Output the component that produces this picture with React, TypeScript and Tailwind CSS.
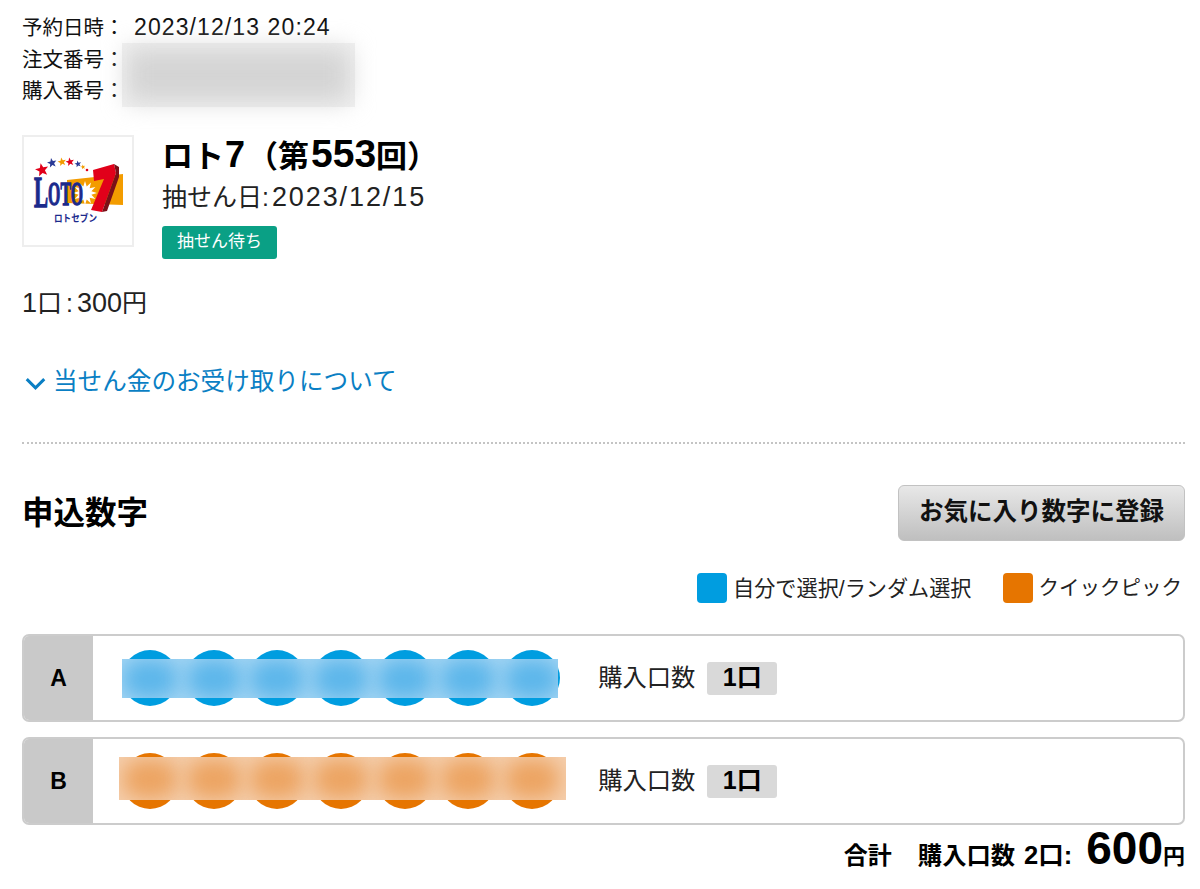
const fontStack = { fontFamily: '"Liberation Sans", "Noto Sans CJK JP", sans-serif' };

const BALLS = [0, 1, 2, 3, 4, 5, 6];

function Star({ x, y, r, fill }: { x: number; y: number; r: number; fill: string }) {
  const points = Array.from({ length: 10 }, (_, i) => {
    const radius = i % 2 === 0 ? r : r * 0.42;
    const angle = (Math.PI / 5) * i - Math.PI / 2 - 0.2;
    return `${x + radius * Math.cos(angle)},${y + radius * Math.sin(angle)}`;
  }).join(' ');
  return <polygon points={points} fill={fill} />;
}

function Burst({ x, y, r }: { x: number; y: number; r: number }) {
  const points = Array.from({ length: 24 }, (_, i) => {
    const radius = i % 2 === 0 ? r : r * 0.55;
    const angle = (Math.PI / 12) * i;
    return `${x + radius * Math.cos(angle)},${y + radius * Math.sin(angle)}`;
  }).join(' ');
  return <polygon points={points} fill="#ffffff" />;
}

function LotoLogo() {
  return (
    <svg viewBox="0 0 108 108" className="h-[108px] w-[108px]">
      <polygon points="43,43 99,37 99,68 43,66" fill="#f39c00" />
      <Burst x={61} y={56} r={12} />
      <text
        x="10"
        y="70"
        fontFamily="Liberation Serif"
        fontWeight="700"
        fill="#1b2a8c"
        stroke="#1b2a8c"
        strokeWidth="1.3"
        textLength="49"
        lengthAdjust="spacingAndGlyphs"
      >
        <tspan fontSize="44">L</tspan>
        <tspan fontSize="33" dy="-2">OTO</tspan>
      </text>
      <polygon points="69,33 90,27 92,36 78,75 67,73 80,42 70,44" fill="#e1001a" />
      <polygon points="90,27 95,30 95,40 83,74 78,75 92,36" fill="#7a1018" />
      <text x="30" y="85" fontFamily="Noto Sans CJK JP" fontWeight="700" fontSize="10" fill="#1b2a8c" textLength="43" lengthAdjust="spacingAndGlyphs">ロトセブン</text>
      <Star x={18} y={33} r={7} fill="#e1001a" />
      <Star x={28} y={26} r={5} fill="#2a3a96" />
      <Star x={38} y={25} r={4.5} fill="#f39c00" />
      <Star x={46} y={25} r={4.5} fill="#e1001a" />
      <Star x={54} y={27} r={3.5} fill="#2a3a96" />
      <Star x={59} y={30} r={2.5} fill="#f39c00" />
      <circle cx="63" cy="33" r="1.3" fill="#e1001a" />
    </svg>
  );
}

function Row({ label, color, patch, blob, inner }: { label: string; color: string; patch: string; blob: string; inner: string }) {
  return (
    <div className="flex h-[88px] overflow-hidden rounded-[7px] border-2 border-[#cccccc] bg-white">
      <div className="flex w-[69px] shrink-0 items-center justify-center bg-[#c9c9c9] text-[23px] font-bold text-black">
        {label}
      </div>
      <div className="flex flex-1 items-center">
        <div className="relative ml-[29px] flex gap-[7.7px]">
          {BALLS.map((n) => (
            <div key={n} className={`h-[56px] w-[56px] rounded-full ${color}`} />
          ))}
          {/* number hidden behind a blurred strip */}
          <div className={`absolute overflow-hidden ${patch}`}>
            <div className={`flex h-full items-center gap-[7.7px] ${inner}`}>
              {BALLS.map((n) => (
                <div key={n} className={`h-[40px] w-[56px] shrink-0 rounded-full blur-[10px] ${blob}`} />
              ))}
            </div>
          </div>
        </div>
        <span className="ml-[38px] text-[24.3px] leading-none text-[#222222]">購入口数</span>
        <span className="ml-[12px] flex h-[33px] w-[70px] items-center justify-center rounded-[3px] bg-[#d9d9d9] text-[25px] font-bold text-black">
          1口
        </span>
      </div>
    </div>
  );
}

export default function App() {
  return (
    <div className="h-[889px] w-[1200px] overflow-hidden bg-white pl-[22px] pr-[15px] pt-[12px] text-[#111111]" style={fontStack}>
      <div className="relative text-[20.5px] leading-[31.5px]">
        <div className="flex">
          <span className="w-[112px]">予約日時：</span>
          <span className="text-[23px] tracking-[1.1px]">2023/12/13 20:24</span>
        </div>
        <div>注文番号：</div>
        <div>購入番号：</div>
        <div className="absolute left-[100px] top-[31px] h-[64px] w-[233px] bg-[#f1f1f1]">
          <div className="absolute inset-[5px] bg-[#d4d4d4] blur-md" />
        </div>
      </div>

      <div className="mt-[28px] flex">
        <div className="h-[112px] w-[112px] border-2 border-[#eeeeee]">
          <LotoLogo />
        </div>
        <div className="ml-[28px]">
          <h1 className="-mt-[1px] h-[38px] text-[31px] font-bold leading-[38px] text-black">
            ロト<span className="ml-[1px] mr-[2px] text-[36px] leading-none">7</span>（第<span className="ml-[2px] text-[39px] leading-none">553</span>回）
          </h1>
          <p className="mt-[8px] h-[34px] text-[25px] leading-[34px] text-[#222222]">
            抽せん日:<span className="ml-[3px] text-[27px] leading-none tracking-[1.9px]">2023/12/15</span>
          </p>
          <span className="mt-[12px] flex h-[33px] w-[115px] items-center justify-center rounded-[3px] bg-[#0aa085] text-[17px] text-white">
            抽せん待ち
          </span>
        </div>
      </div>

      <p className="mt-[27px] h-[34px] text-[25px] leading-[34px] text-[#222222]">
        <span className="text-[27px] leading-none">1</span>口<span className="mx-[4px]">:</span><span className="text-[27px] leading-none">300</span>円
      </p>

      <a className="mt-[45px] flex items-center text-[24.6px] leading-[34px] text-[#0a7fc4]">
        <svg viewBox="0 0 24 14" className="ml-[3px] mr-[7px] mt-[4px] h-[13px] w-[21px]" fill="none" stroke="#0a7fc4" strokeWidth="3.4">
          <path d="M2 2l10 10L22 2" />
        </svg>
        当せん金のお受け取りについて
      </a>

      <div className="mt-[43px] border-t-2 border-dotted border-[#c4c4c4]" />

      <div className="mt-[41px] flex items-center justify-between">
        <h2 className="text-[31.5px] font-bold leading-[40px] text-black">申込数字</h2>
        <button className="flex h-[56px] w-[287px] items-center justify-center rounded-[6px] border border-[#c2c2c2] bg-gradient-to-b from-[#e8e8e8] to-[#bfbfbf] text-[24.5px] font-bold text-[#111111]">
          お気に入り数字に登録
        </button>
      </div>

      <div className="mt-[32px] flex items-center justify-end text-[#222222]">
        <span className="h-[30px] w-[30px] rounded-[4px] bg-[#009de0]" />
        <span className="ml-[6px] text-[21.15px]">自分で選択/ランダム選択</span>
        <span className="ml-[31px] h-[30px] w-[30px] rounded-[4px] bg-[#e67500]" />
        <span className="ml-[6px] mr-[3px] text-[20.5px]">クイックピック</span>
      </div>

      <div className="mt-[30px] flex flex-col gap-[15px]">
        <Row label="A" color="bg-[#009de0]" patch="left-0 right-[2px] top-[9px] h-[39px] bg-[#a6d6f4]" blob="bg-[#5cb6ea]" inner="" />
        <Row label="B" color="bg-[#e67500]" patch="-left-[3px] -right-[6px] top-[4px] h-[43px] bg-[#f5cfae]" blob="bg-[#eca462]" inner="ml-[3px]" />
      </div>

      <div className="-mt-[3px] flex items-baseline justify-end font-bold text-black">
        <span className="text-[24px]">合計</span>
        <span className="ml-[26px] text-[24.3px]">購入口数</span>
        <span className="ml-[9px] text-[25.5px]">2口:</span>
        <span className="ml-[14px] text-[46px] leading-[52px]">600</span>
        <span className="text-[22px]">円</span>
      </div>
    </div>
  );
}
